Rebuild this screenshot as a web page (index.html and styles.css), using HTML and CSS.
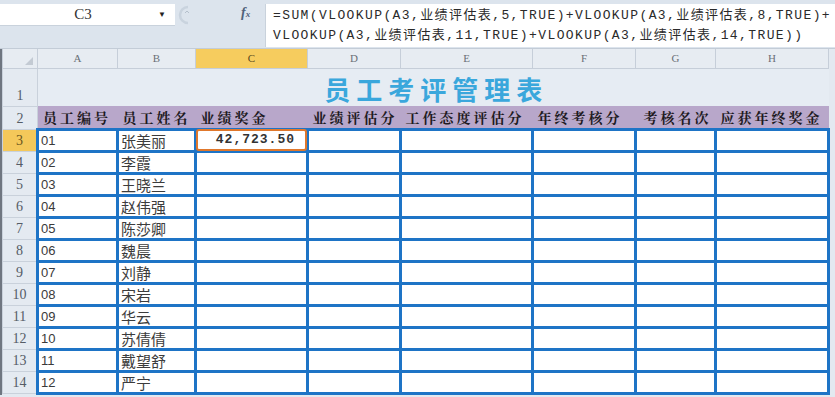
FILE: index.html
```html
<!DOCTYPE html>
<html lang="zh-CN">
<head>
  <meta charset="UTF-8" />
  <title>员工考评管理表</title>
  <link rel="stylesheet" href="styles.css">
</head>
<body>

  <div class="formula-bar">
    <div class="name-area">
      <div class="name-box">
        <span class="cell-ref">C3</span>
        <span class="drop">&#9660;</span>
      </div>
    </div>
    <div class="grip">
      <svg width="14" height="22" viewBox="0 0 14 22">
        <path d="M12 3 A8 8 0 0 0 12 19" fill="none" stroke="#c9d3de" stroke-width="2.5"/>
        <path d="M9 9 l2 -2 l2 2" fill="none" stroke="#b5c0cc" stroke-width="1"/>
      </svg>
    </div>
    <div class="fx">f<sub>x</sub></div>
    <div class="formula">
      <div class="line">=SUM(VLOOKUP(A3,业绩评估表,5,TRUE)+VLOOKUP(A3,业绩评估表,8,TRUE)+</div>
      <div class="line">VLOOKUP(A3,业绩评估表,11,TRUE)+VLOOKUP(A3,业绩评估表,14,TRUE))</div>
    </div>
  </div>

  <div class="sheet-wrap">
    <table class="sheet">
      <colgroup>
        <col class="w-head">
        <col class="w-a">
        <col class="w-b">
        <col class="w-c">
        <col class="w-d">
        <col class="w-e">
        <col class="w-f">
        <col class="w-g">
        <col class="w-h">
      </colgroup>
      <tr class="col-head">
        <th class="corner"><span class="tri"></span></th>
        <th>A</th><th>B</th><th class="active">C</th><th>D</th>
        <th>E</th><th>F</th><th>G</th><th>H</th>
      </tr>
      <tr class="title-row">
        <th class="row-head">1</th>
        <td colspan="8" class="title">员工考评管理表</td>
      </tr>
      <tr class="field-row">
        <th class="row-head">2</th>
        <td>员工编号</td>
        <td>员工姓名</td>
        <td>业绩奖金</td>
        <td>业绩评估分</td>
        <td>工作态度评估分</td>
        <td>年终考核分</td>
        <td class="pad">考核名次</td>
        <td>应获年终奖金</td>
      </tr>
    </table>
  </div>

  <script>
    const staff = [
      ['01', '张美丽'], ['02', '李霞'], ['03', '王晓兰'], ['04', '赵伟强'],
      ['05', '陈莎卿'], ['06', '魏晨'], ['07', '刘静'], ['08', '宋岩'],
      ['09', '华云'], ['10', '苏倩倩'], ['11', '戴望舒'], ['12', '严宁']
    ];

    const sheet = document.querySelector('.sheet');

    staff.forEach((person, i) => {
      const row = document.createElement('tr');
      row.className = 'data-row';
      const num = i + 3;
      row.innerHTML = `
        <th class="row-head${num === 3 ? ' active' : ''}">${num}</th>
        <td class="id">${person[0]}</td>
        <td class="name">${person[1]}</td>
        <td class="money">${num === 3 ? '<div class="selected">42,723.50</div>' : ''}</td>
        <td></td><td></td><td></td><td></td><td></td>
      `;
      sheet.appendChild(row);
    });
  </script>

</body>
</html>
```

FILE: styles.css
```css
* {
  margin: 0;
  padding: 0;
  box-sizing: border-box;
}

body {
  background-color: #e3e9f0;
  font-family: 'Liberation Serif', 'Noto Sans CJK SC', serif;
  color: #333;
  width: 835px;
  height: 397px;
  overflow: hidden;
}

/* formula bar */

.formula-bar {
  display: flex;
  height: 49px;
  padding-top: 4px;
  background-color: #dce4ed;
  border-bottom: 1px solid #c3ccd7;
}

.name-area {
  width: 175px;
  border-bottom: 1px solid #c9d2dc;
  height: 22px;
}

.name-box {
  display: flex;
  align-items: center;
  height: 21px;
  background-color: #fff;
}

.cell-ref {
  flex: 1;
  text-align: center;
  font-size: 15px;
  color: #333;
  padding-left: 8px;
}

.drop {
  font-size: 8px;
  color: #222;
  margin-right: 9px;
}

.grip {
  width: 66px;
  padding-left: 1px;
}

.grip svg {
  display: block;
}

.fx {
  width: 24px;
  font-family: 'Liberation Serif', serif;
  font-style: italic;
  font-weight: bold;
  font-size: 14px;
  color: #50627a;
  padding-top: 1px;
}

.fx sub {
  font-size: 9px;
  vertical-align: 0;
}

.formula {
  flex: 1;
  background-color: #fff;
  height: 43px;
  padding: 2px 0 0 7px;
  border-left: 1px solid #c9d2dc;
  overflow: hidden;
  white-space: nowrap;
  font-family: 'Liberation Mono', 'Noto Sans CJK SC', monospace;
  font-size: 13px;
  letter-spacing: 1.4px;
  color: #2a2a2a;
}

.formula .line {
  height: 20px;
  line-height: 20px;
}

/* sheet */

.sheet-wrap {
  border-left: 2px solid #6f7680;
}

.sheet {
  border-collapse: collapse;
  table-layout: fixed;
  width: 826px;
}

.w-head { width: 35px; }
.w-a { width: 80px; }
.w-b { width: 78px; }
.w-c { width: 112px; }
.w-d { width: 93px; }
.w-e { width: 132px; }
.w-f { width: 103px; }
.w-g { width: 80px; }
.w-h { width: 113px; }

.col-head th {
  height: 19px;
  background-color: #e7ecf2;
  border: 1px solid #c6ced9;
  border-top: none;
  font-weight: normal;
  font-size: 11px;
  color: #6a6f77;
}

.col-head th.active {
  background-color: #f6cc5e;
  color: #5a4a20;
}

.corner {
  position: relative;
}

.tri {
  position: absolute;
  right: 4px;
  bottom: 3px;
  width: 0;
  height: 0;
  border-left: 8px solid transparent;
  border-bottom: 8px solid #c3cad3;
}

.row-head {
  background-color: #e4eaf1;
  border: 1px solid #c9d1db;
  font-weight: normal;
  font-size: 14px;
  color: #555c66;
  text-align: center;
  vertical-align: bottom;
  padding-bottom: 2px;
}

.row-head.active {
  background-color: #f4c85a;
  color: #6a5520;
}

.title-row {
  height: 38px;
}

.title {
  background-color: #e6ecf3;
  text-align: center;
  font-family: 'Noto Sans CJK SC', sans-serif;
  font-weight: bold;
  font-size: 26px;
  letter-spacing: 6px;
  color: #3aa7dc;
  line-height: 1;
  vertical-align: bottom;
  padding: 0 0 4px 6px;
}

.field-row {
  height: 23px;
}

.field-row td {
  background-color: #b8a7ca;
  font-family: 'Noto Serif CJK SC', 'Noto Sans CJK SC', serif;
  font-weight: bold;
  font-size: 14px;
  letter-spacing: 3px;
  color: #1e1a22;
  padding-left: 5px;
  white-space: nowrap;
  overflow: hidden;
}

.field-row td.pad {
  padding-left: 8px;
}

.data-row {
  height: 22px;
}

.data-row td {
  background-color: #fff;
  border: 3px solid #1e74c6;
  padding: 0 2px;
  white-space: nowrap;
}

.data-row .id {
  font-family: 'Liberation Sans', sans-serif;
  font-size: 13px;
  color: #3a3a3a;
}

.data-row .name {
  font-family: 'Noto Sans CJK SC', sans-serif;
  font-size: 15px;
  color: #3c3c3c;
  line-height: 1;
}

.data-row .money {
  position: relative;
  padding: 0;
}

.selected {
  position: absolute;
  left: -1px;
  right: -1px;
  top: -2px;
  bottom: -1px;
  border: 2px solid #e0782c;
  border-radius: 3px;
  background-color: #fff;
  text-align: right;
  padding-right: 10px;
  font-family: 'Liberation Mono', monospace;
  font-weight: bold;
  font-size: 13px;
  letter-spacing: 1px;
  line-height: 18px;
  color: #333;
}
```
